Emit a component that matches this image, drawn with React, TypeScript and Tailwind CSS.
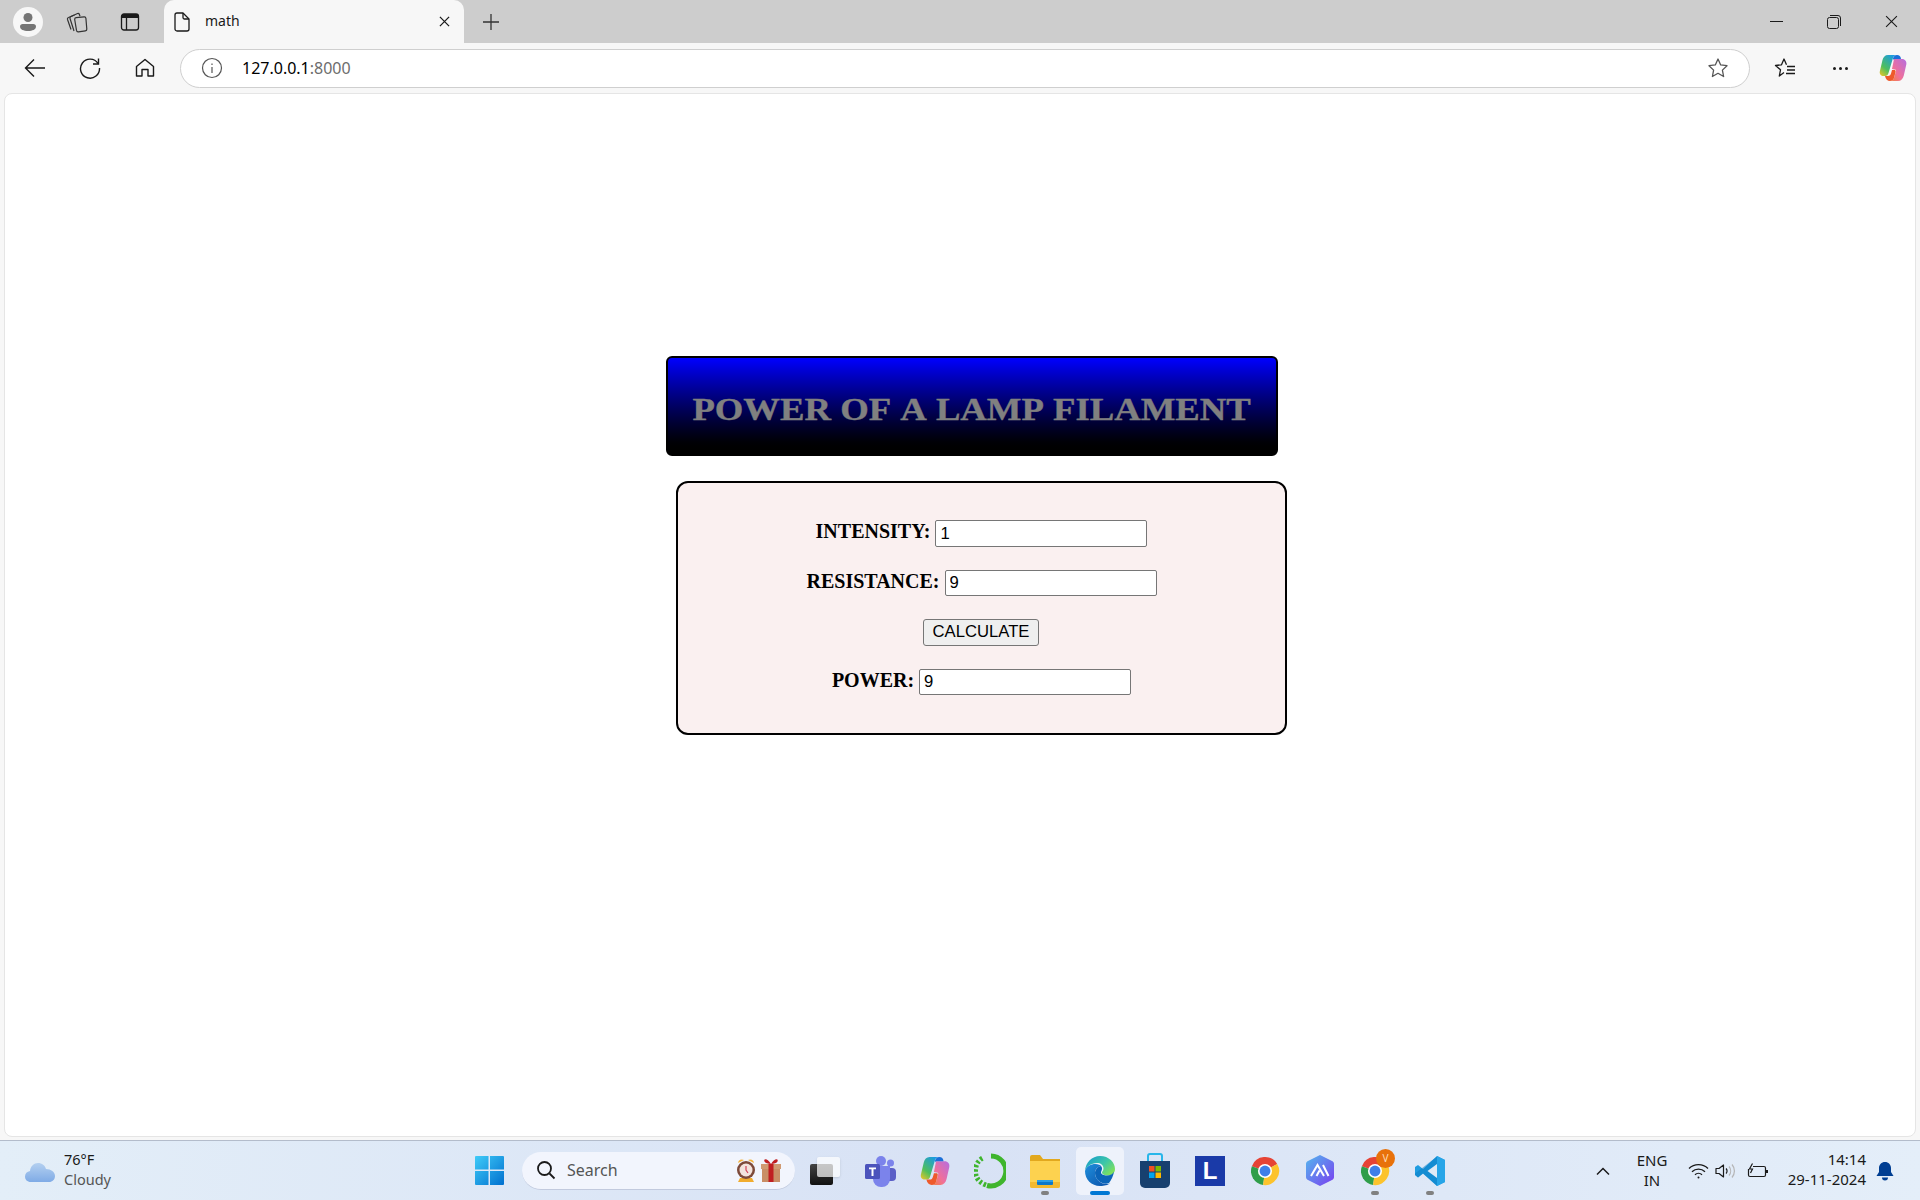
import React from "react";

const UI = "font-['Noto_Sans',sans-serif]";

function Profile() {
  return (
    <div className="w-[30px] h-[30px] rounded-full bg-[#f7f7f7] flex items-center justify-center">
      <svg width="22" height="22" viewBox="0 0 22 22" fill="#757575">
        <circle cx="11" cy="6.5" r="4.5" />
        <path d="M3 15.5c0-1.6 1.2-2.5 2.6-2.5h10.8c1.4 0 2.6.9 2.6 2.5 0 3-3.6 4.5-8 4.5s-8-1.5-8-4.5z" />
      </svg>
    </div>
  );
}

function Collections() {
  return (
    <svg width="22" height="22" viewBox="0 0 22 22" fill="none" stroke="#333" strokeWidth="1.2" strokeLinejoin="round">
      <path d="M5 18.500 1.500 8.500c-.3-1 .1-1.700 1-2L8.500 4" />
      <path d="M8 20 4 7.500c-.3-1 .1-1.700 1-2L11.500 2.500c.8-.3 1.500 0 1.800.8l.7 2" />
      <path d="M8.700 8.500c-.1-1 .5-1.700 1.400-1.800l8-.9c1-.1 1.700.5 1.800 1.400l.9 10.800c.1 1-.5 1.700-1.400 1.800l-7 1c-1 .1-1.700-.4-1.900-1.400z" fill="#cdcdcd" />
    </svg>
  );
}

function VerticalTabs() {
  return (
    <svg width="20" height="20" viewBox="0 0 20 20" fill="none">
      <rect x="1.5" y="2" width="17" height="16" rx="2.5" stroke="#1a1a1a" strokeWidth="1.3" />
      <path d="M1.5 6V4.5A2.5 2.5 0 0 1 4 2h12a2.5 2.5 0 0 1 2.5 2.5V6z" fill="#1a1a1a" />
      <path d="M6.5 6v12" stroke="#1a1a1a" strokeWidth="1.3" />
    </svg>
  );
}

function Doc() {
  return (
    <svg width="16" height="20" viewBox="0 0 16 20" fill="none" stroke="#1a1a1a" strokeWidth="1.3" strokeLinejoin="round">
      <path d="M1 3a2 2 0 0 1 2-2h6l6 6v10a2 2 0 0 1-2 2H3a2 2 0 0 1-2-2z" />
      <path d="M9 1v4.5A1.5 1.5 0 0 0 10.5 7H15" />
    </svg>
  );
}

function Cross({ size = 12, w = 1.4 }: { size?: number; w?: number }) {
  return (
    <svg width={size} height={size} viewBox="0 0 12 12" fill="none" stroke="#1a1a1a" strokeWidth={w}>
      <path d="M1 1l10 10M11 1 1 11" />
    </svg>
  );
}

function Plus() {
  return (
    <svg width="18" height="18" viewBox="0 0 18 18" fill="none" stroke="#333" strokeWidth="1.3">
      <path d="M9 1v16M1 9h16" />
    </svg>
  );
}

function Star({ c = "#555" }: { c?: string }) {
  return (
    <svg width="22" height="22" viewBox="0 0 22 22" fill="none" stroke={c} strokeWidth="1.3" strokeLinejoin="round">
      <path d="m11 2 2.7 5.9 6.3.8-4.6 4.4 1.2 6.4L11 16.3l-5.6 3.2 1.2-6.4L2 8.7l6.3-.8z" />
    </svg>
  );
}

function Favorites() {
  return (
    <svg width="22" height="22" viewBox="0 0 22 22" fill="none" stroke="#1a1a1a" strokeWidth="1.3" strokeLinejoin="round">
      <path d="M10 15.5 5.3 19l1.2-6.2L1.5 8.5l6-.7L10 2l2.5 5.8" />
      <path d="M13 9.5h8M13 13h8M12 16.5h9" />
    </svg>
  );
}

function Copilot({ s = 28 }: { s?: number }) {
  const id = `cp${s}`;
  return (
    <svg width={s} height={s} viewBox="0 0 28 28">
      <defs>
        <linearGradient id={`${id}a`} x1="0" y1="1" x2="0.7" y2="0">
          <stop offset="0" stopColor="#f6c624" />
          <stop offset="0.4" stopColor="#4fbf5c" />
          <stop offset="1" stopColor="#1b9be0" />
        </linearGradient>
        <linearGradient id={`${id}b`} x1="1" y1="0" x2="0" y2="1">
          <stop offset="0" stopColor="#b56ee0" />
          <stop offset="0.6" stopColor="#f0709a" />
          <stop offset="1" stopColor="#f5803c" />
        </linearGradient>
      </defs>
      <path d="M9 1h9c-2 0-3.4 1-4 3l-4.5 15C9 21 8 22 6 22H4.500C2 22 .3 20 .8 17.500L3.500 6C4.300 3 6 1 9 1z" fill={`url(#${id}a)`} />
      <path d="M15 5h8c3 0 5 2.500 4.300 5.500l-2.500 11C24 25 22 27 19 27h-8c2 0 3.400-1 4-3l2-7c.5-1.500-1-1.500-1.500-1.500L13 15z" fill={`url(#${id}b)`} />
      <path d="M14 4.500c.6-2 2-3.500 4-3.500 2.500 0 3.500 1 4 4h-6c-1 0-1.700.2-2 1z" fill="#1c6fd8" />
      <path d="M15 24c-.6 2-2 3-4 3-2.500 0-4.500-2-5-5h3c2 0 2.500-1 3-2.500l1-3.500h2.500c.5 0 1.500.6 1 2z" fill="#ee5a2c" />
    </svg>
  );
}

function Cloud() {
  return (
    <svg width="32" height="26" viewBox="0 0 32 26">
      <defs>
        <linearGradient id="cl" x1="0" y1="0" x2="0" y2="1">
          <stop offset="0" stopColor="#b4d0f0" />
          <stop offset="1" stopColor="#7fabe6" />
        </linearGradient>
      </defs>
      <path d="M7 24C3 24 1 21.500 1 18.500S3 13.500 6 13c.5-5 4-8 8-8s7 2.500 8 6c5 0 9 3 9 7 0 3.500-2.500 6-6 6z" fill="url(#cl)" />
    </svg>
  );
}

function WinLogo() {
  return (
    <svg width="29" height="29" viewBox="0 0 29 29">
      <defs>
        <linearGradient id="wn" x1="0" y1="0" x2="1" y2="1">
          <stop offset="0" stopColor="#3fcbf8" />
          <stop offset="1" stopColor="#0070cf" />
        </linearGradient>
      </defs>
      <path d="M1 0h12.500v13.500H0V1a1 1 0 0 1 1-1zM15 0h13a1 1 0 0 1 1 1v12.500H15zM0 15h13.500v14H1a1 1 0 0 1-1-1zM15 15h14v13a1 1 0 0 1-1 1H15z" fill="url(#wn)" />
    </svg>
  );
}

function Alarm() {
  return (
    <svg width="22" height="28" viewBox="0 0 22 28">
      <path d="M3 7a4 4 0 0 1 6-3zM19 7a4 4 0 0 0-6-3z" fill="#f3b23a" />
      <path d="M5 22l-2 4h16l-2-4z" fill="#f1ac2e" />
      <circle cx="11" cy="14" r="9" fill="#7d4a3a" />
      <circle cx="11" cy="14" r="6.500" fill="#f3e4de" />
      <path d="M11 10v4l2 3" stroke="#d2455a" strokeWidth="1.200" fill="none" />
    </svg>
  );
}

function Gift() {
  return (
    <svg width="20" height="24" viewBox="0 0 20 24">
      <rect x="1" y="8" width="18" height="16" fill="#c98e66" />
      <rect x="0" y="6" width="20" height="5" fill="#d09a72" />
      <rect x="7.500" y="6" width="5" height="18" fill="#c01f22" />
      <path d="M10 6C7 0 2 0 3.500 3.500 4 5 7 6 10 6zM10 6c3-6 8-6 6.500-2.500C16 5 13 6 10 6z" fill="#c01f22" />
    </svg>
  );
}

function TaskView() {
  return (
    <div className="relative w-[30px] h-[28px]">
      <div className="absolute left-0 bottom-0 w-[23px] h-[21px] rounded-[2px] bg-gradient-to-b from-[#444] to-[#111]" />
      <div className="absolute right-0 top-0 w-[23px] h-[20px] rounded-[2px] bg-white/70 shadow-sm" />
    </div>
  );
}

function Teams() {
  return (
    <svg width="31" height="32" viewBox="0 0 31 32">
      <circle cx="25.500" cy="8" r="3.500" fill="#7b83eb" />
      <rect x="20" y="13" width="11" height="13" rx="4" fill="#5b5fc7" />
      <circle cx="16" cy="6" r="5" fill="#7b83eb" />
      <path d="M8 11h17v13a8 8 0 0 1-8 8h-1a8 8 0 0 1-8-8z" fill="#7b83eb" />
      <rect x="0" y="9" width="15" height="15" rx="1.500" fill="#4b53bc" />
      <path d="M4 12.500h7v1.800H8.500V21H6.500v-6.700H4z" fill="#fff" />
    </svg>
  );
}

function Ring() {
  return (
    <svg width="32" height="36" viewBox="0 0 32 36" fill="none">
      <path d="M17 3a15 15 0 1 1-4 29.500" stroke="#3fb52d" strokeWidth="5" />
      <path d="M12 32C4 29 1.500 24 1.500 18S4 7 10 4.500" stroke="#3fb52d" strokeWidth="5" strokeDasharray="2.500 2" />
    </svg>
  );
}

function Folder() {
  return (
    <svg width="30" height="34" viewBox="0 0 30 34">
      <path d="M0 3a2 2 0 0 1 2-2h8l3 4h17v10H0z" fill="#e2a81e" />
      <path d="M0 7h30v25a2 2 0 0 1-2 2H2a2 2 0 0 1-2-2z" fill="#fdd24f" />
      <path d="M0 28h30v4a2 2 0 0 1-2 2H2a2 2 0 0 1-2-2z" fill="#f3b92f" />
      <rect x="7" y="26" width="16" height="5" rx="1" fill="#0c78c9" />
      <rect x="7" y="26" width="16" height="2" fill="#2b9ee6" />
    </svg>
  );
}

function Edge() {
  return (
    <svg width="30" height="36" viewBox="0 0 30 30">
      <defs>
        <linearGradient id="eg" x1="0" y1="0" x2="1" y2="0.700">
          <stop offset="0" stopColor="#1298d0" />
          <stop offset="0.600" stopColor="#3dc6a8" />
          <stop offset="1" stopColor="#7ee05c" />
        </linearGradient>
        <linearGradient id="eb" x1="0" y1="0" x2="1" y2="1">
          <stop offset="0" stopColor="#1f8fdc" />
          <stop offset="1" stopColor="#0a4fa8" />
        </linearGradient>
      </defs>
      <path d="M15 0c9 0 15 6.500 15 13 0 4-3 6.500-7 6.500-3 0-6-1-6-3 0-1 1.500-1.500 1.500-4C18.500 9 15.500 7 12 7 6 7 1 11 0 15 .5 6.500 7 0 15 0z" fill="url(#eg)" />
      <path d="M0 15c1-4.500 6-7 10.500-7 2.500 0 5 1 5.500 2-3 .5-6 3-6 7 0 6 5 11 12 11 1.500 0 2.500-.2 3.500-.7A15 15 0 0 1 15 30C6.500 30 0 23.500 0 15z" fill="url(#eb)" />
      <path d="M10 17c0-3.500 3-6.500 6-7 .7 1 1 1.500 1 2.500 0 2-1 2.500-1 4 0 2 3 3 6 3 3 0 6-1.500 7-4-.5 4.500-3 9-5 11.500-1 .5-2 .7-3 .7-6 0-11-5-11-10.700z" fill="#0b64b8" />
    </svg>
  );
}

function Store() {
  return (
    <svg width="30" height="36" viewBox="0 0 30 36">
      <path d="M8 9V3a2 2 0 0 1 2-2h10a2 2 0 0 1 2 2v6" fill="none" stroke="#27b6ea" strokeWidth="2" />
      <path d="M0 8h30v22a5 5 0 0 1-5 5H5a5 5 0 0 1-5-5z" fill="#17406f" />
      <rect x="9" y="13" width="5.500" height="5.500" fill="#f25022" />
      <rect x="15.500" y="13" width="5.500" height="5.500" fill="#7fba00" />
      <rect x="9" y="19.500" width="5.500" height="5.500" fill="#00a4ef" />
      <rect x="15.500" y="19.500" width="5.500" height="5.500" fill="#ffb900" />
    </svg>
  );
}

function LLogo() {
  return (
    <div className="w-[30px] h-[30px] bg-[#1a3aa8] flex items-center justify-center">
      <span className="font-['Liberation_Sans',sans-serif] font-bold text-[24px] leading-none text-white">L</span>
    </div>
  );
}

function Chrome() {
  return (
    <svg width="30" height="30" viewBox="0 0 32 32">
      <path d="M16 16 29 8.500A15 15 0 0 0 2 10.800z" fill="#e64335" />
      <path d="M16 16 2 10.800A15 15 0 0 0 14 30.900z" fill="#2f9e4a" />
      <path d="M16 16 14 30.900A15 15 0 0 0 29 8.500z" fill="#fcc32c" />
      <circle cx="16" cy="16" r="7.500" fill="#fff" />
      <circle cx="16" cy="16" r="5.800" fill="#3f7fe8" />
    </svg>
  );
}

function Hex() {
  return (
    <svg width="28" height="31" viewBox="0 0 28 31">
      <defs>
        <linearGradient id="hx" x1="0" y1="0" x2="1" y2="1">
          <stop offset="0" stopColor="#53b8ee" />
          <stop offset="1" stopColor="#7a3df0" />
        </linearGradient>
      </defs>
      <path d="M14 0 26 6c1.300.7 2 1.700 2 3v13c0 1.300-.7 2.300-2 3l-12 6-12-6c-1.300-.7-2-1.700-2-3V9c0-1.300.7-2.300 2-3z" fill="url(#hx)" />
      <path d="M5 21 11.500 10 18 21M10.500 21l3-5.500M17 10l5.500 11" stroke="#fff" strokeWidth="2" fill="none" />
    </svg>
  );
}

function VSCode() {
  return (
    <svg width="30" height="30" viewBox="0 0 30 30">
      <path d="M22 0 30 4v22l-8 4-14-12.500-5 4L0 19V11l3-2 5 4z" fill="#1f9ce0" />
      <path d="M22 0v30L8 17.500l-5 4L0 19v-1.500l22-17z" fill="#0a7cc4" opacity="0.500" />
      <path d="M22 8 12.500 15 22 22z" fill="#dfeaf6" />
      <path d="M22 0 30 4v22l-8 4z" fill="#27a5e8" />
    </svg>
  );
}

function Slot({ children, active, dot }: { children: React.ReactNode; active?: boolean; dot?: boolean }) {
  return (
    <div className="relative w-[55px] h-[60px] flex items-center justify-center">
      {active && <div className="absolute left-[3.500px] top-[6px] w-[48px] h-[48px] rounded-[5px] bg-[#eef2fb]" />}
      <div className="relative">{children}</div>
      {active && <div className="absolute left-[17.500px] top-[50px] w-[20px] h-[4px] rounded-full bg-[#0078d4]" />}
      {dot && <div className="absolute left-[23.500px] top-[50px] w-[8px] h-[4px] rounded-full bg-[#808080]" />}
    </div>
  );
}

function Row({ label, value, tall }: { label: string; value: string; tall?: boolean }) {
  return (
    <div className={`flex justify-center items-center gap-[5px] ${tall ? "h-[27px]" : "h-[26px]"}`}>
      <label className={`font-['Liberation_Serif',serif] font-bold text-[20px] leading-[22px] text-black ${tall ? "pb-[5px]" : "pb-[4px]"}`}>{label}</label>
      <input
        readOnly
        value={value}
        className="w-[212px] h-full bg-white border border-[#767676] rounded-[2px] pl-[4px] font-['Liberation_Sans',sans-serif] text-[16.67px] text-black outline-none"
      />
    </div>
  );
}

export default function App() {
  return (
    <div className={`w-[1920px] h-[1200px] flex flex-col overflow-hidden bg-[#f7f7f7] ${UI}`}>
      {/* tab strip */}
      <div className="h-[43px] flex bg-[#cdcdcd] shrink-0">
        <div className="w-[56px] flex items-center justify-center"><Profile /></div>
        <div className="w-[42px] flex items-center justify-center"><Collections /></div>
        <div className="w-[63px] flex items-center justify-center"><VerticalTabs /></div>
        <div className="ml-[3px] w-[300px] rounded-t-[10px] bg-[#f7f7f7] flex items-center pl-[10px] pr-[14px]">
          <Doc />
          <span className="ml-[15px] text-[14px] text-[#1a1a1a] flex-1 pb-[2px]">math</span>
          <Cross size={11} />
        </div>
        <div className="w-[53px] pl-[1px] flex items-center justify-center"><Plus /></div>
        <div className="flex-1" />
        <div className="w-[57px] flex items-center justify-center">
          <div className="w-[13px] h-[1px] bg-[#1a1a1a]" />
        </div>
        <div className="w-[57px] flex items-center justify-center">
          <svg width="14" height="14" viewBox="0 0 14 14" fill="none" stroke="#1a1a1a" strokeWidth="1">
            <rect x="0.500" y="2.500" width="11" height="11" rx="2" />
            <path d="M3 .5h8a2.500 2.500 0 0 1 2.500 2.500v8" />
          </svg>
        </div>
        <div className="w-[58px] flex items-center justify-center"><Cross size={13} w={1} /></div>
      </div>

      {/* toolbar */}
      <div className="h-[50px] flex items-center shrink-0">
        <div className="w-[70px] flex items-center justify-center">
          <svg width="22" height="20" viewBox="0 0 22 20" fill="none" stroke="#1a1a1a" strokeWidth="1.400">
            <path d="M21 10H1.500M10 1.500 1.500 10l8.500 8.500" />
          </svg>
        </div>
        <div className="w-[40px] flex items-center justify-center">
          <svg width="22" height="22" viewBox="0 0 22 22" fill="none" stroke="#1a1a1a" strokeWidth="1.400">
            <path d="M19 6.500A9.500 9.500 0 1 0 20.500 11" />
            <path d="M19.500 1.500v5.500H14" />
          </svg>
        </div>
        <div className="ml-[15px] w-[40px] flex items-center justify-center">
          <svg width="20" height="20" viewBox="0 0 20 20" fill="none" stroke="#1a1a1a" strokeWidth="1.400" strokeLinejoin="round">
            <path d="M1.500 8.500 10 1.500l8.500 7V18h-5.500v-6.500H7V18H1.500z" />
          </svg>
        </div>
        <div className="ml-[15px] w-[1570px] h-[39px] rounded-full bg-white border border-[#cfcfcf] flex items-center pl-[20px] pr-[20px]">
          <svg width="22" height="22" viewBox="0 0 22 22" fill="none" stroke="#555" strokeWidth="1.200">
            <circle cx="11" cy="11" r="9.500" />
            <path d="M11 10v6M11 6.500v1.500" />
          </svg>
          <span className="ml-[19px] text-[16px] leading-none flex-1 text-black">
            127.0.0.1<span className="text-[#6d6d6d]">:8000</span>
          </span>
          <Star />
        </div>
        <div className="w-[70px] flex items-center justify-center"><Favorites /></div>
        <div className="w-[40px] flex items-center justify-center gap-[3px]">
          <i className="w-[3px] h-[3px] rounded-full bg-[#1a1a1a]" />
          <i className="w-[3px] h-[3px] rounded-full bg-[#1a1a1a]" />
          <i className="w-[3px] h-[3px] rounded-full bg-[#1a1a1a]" />
        </div>
        <div className="w-[60px] pl-[6px] flex items-center justify-center"><Copilot /></div>
      </div>

      {/* page */}
      <div className="flex-1 min-h-0 px-[4px] pb-[3px] flex">
        <div className="flex-1 rounded-lg border border-[#e5e5e5] bg-white pl-[661px] pt-[262px]">
          <div className="w-[612px] h-[100px] box-border border-2 border-black rounded-[6px] bg-gradient-to-b from-[#0000ff] to-[#000000] flex items-center justify-center pt-[5px]">
            <h1 className="font-['Liberation_Serif',serif] font-bold text-[32px] leading-none text-[#808080] whitespace-nowrap scale-x-[1.146] [font-kerning:none] [-webkit-text-stroke:0.4px_#808080]">
              POWER OF A LAMP FILAMENT
            </h1>
          </div>
          <div className="mt-[25px] ml-[10px] w-[611px] h-[254px] box-border border-2 border-black rounded-[12px] bg-[#faf0f0] pt-[37px] flex flex-col gap-[23px]">
            <Row label="INTENSITY:" value="1" tall />
            <Row label="RESISTANCE:" value="9" />
            <div className="flex justify-center pr-[1px]">
              <button className="w-[116px] h-[27px] bg-[#efefef] border border-[#767676] rounded-[3px] font-['Liberation_Sans',sans-serif] text-[16.67px] leading-none text-black pb-[1px]">
                CALCULATE
              </button>
            </div>
            <Row label="POWER:" value="9" />
          </div>
        </div>
      </div>

      {/* taskbar */}
      <div className="h-[60px] shrink-0 border-t border-[#b3bccb] flex items-center bg-gradient-to-r from-[#e3eef8] via-[#d8e2f5] to-[#e4eef9]">
        <div className="w-[64px] pl-[24px] flex items-center"><Cloud /></div>
        <div className="w-[411px] text-[14.5px] leading-[20px] pb-[4px]">
          <div className="text-[#1a1a1a]">76°F</div>
          <div className="text-[#555]">Cloudy</div>
        </div>
        <div className="w-[47px] flex items-center"><WinLogo /></div>
        <div className="w-[273px] h-[38px] rounded-full bg-[#f2f5fd] border-b border-[#c2cade] flex items-center pl-[14px] pr-[14px]">
          <svg width="20" height="20" viewBox="0 0 20 20" fill="none" stroke="#1a1a1a" strokeWidth="1.800">
            <circle cx="8.500" cy="8.500" r="6.500" />
            <path d="m13.500 13.500 5 5" />
          </svg>
          <span className="ml-[11px] flex-1 text-[16px] text-[#555]">Search</span>
          <Alarm />
          <div className="ml-[4px]"><Gift /></div>
        </div>
        <div className="w-[2.500px]" />
        <Slot><TaskView /></Slot>
        <Slot><Teams /></Slot>
        <Slot><Copilot s={30} /></Slot>
        <Slot><Ring /></Slot>
        <Slot dot><Folder /></Slot>
        <Slot active><Edge /></Slot>
        <Slot><Store /></Slot>
        <Slot><LLogo /></Slot>
        <Slot><Chrome /></Slot>
        <Slot><Hex /></Slot>
        <Slot dot>
          <Chrome />
          <div className="absolute -right-[5px] -top-[7px] w-[19px] h-[19px] rounded-full bg-[#e8710a] flex items-center justify-center text-[10px] leading-none text-[#ffdcb5]">V</div>
        </Slot>
        <Slot dot><VSCode /></Slot>
        <div className="w-[170.500px] flex justify-end pr-[17px]">
          <svg width="16" height="10" viewBox="0 0 16 10" fill="none" stroke="#1a1a1a" strokeWidth="1.500">
            <path d="m2 8.500 6-6 6 6" />
          </svg>
        </div>
        <div className="w-[48px] text-center text-[15px] leading-[20px] text-[#1a1a1a] pb-[2px]">
          <div>ENG</div>
          <div>IN</div>
        </div>
        <div className="ml-[9px] w-[26px] flex justify-center">
          <svg width="21" height="16" viewBox="0 0 21 16" fill="none" stroke="#1a1a1a" strokeWidth="1.300">
            <path d="M1 5.500a13.500 13.500 0 0 1 19 0M4 8.800a9.300 9.300 0 0 1 13 0M7 11.800a5 5 0 0 1 7 0" />
            <circle cx="10.500" cy="14.500" r="1" fill="#1a1a1a" stroke="none" />
          </svg>
        </div>
        <div className="ml-[2px] w-[24px] flex justify-center">
          <svg width="20" height="16" viewBox="0 0 20 16" fill="none" strokeWidth="1.200">
            <path d="M1 5.500h3L8.500 2v12L4 10.500H1z" stroke="#1a1a1a" strokeLinejoin="round" />
            <path d="M11 5.500a3.500 3.500 0 0 1 0 5" stroke="#1a1a1a" />
            <path d="M14 3.500a7 7 0 0 1 0 9M17 1.500a10 10 0 0 1 0 13" stroke="#b5b5b5" />
          </svg>
        </div>
        <div className="ml-[7px] w-[28px] flex justify-center">
          <svg width="22" height="16" viewBox="0 0 22 16" fill="none" stroke="#1a1a1a" strokeWidth="1.200">
            <path d="M6 3.500h11a1.500 1.500 0 0 1 1.500 1.500v7a1.500 1.500 0 0 1-1.500 1.500H3A1.500 1.500 0 0 1 1.500 12V6" />
            <path d="M20 7v3" strokeWidth="2" />
            <path d="M5.500.5 2.500 6h3l-2 4" />
          </svg>
        </div>
        <div className="ml-[2px] w-[92px] text-right text-[15px] leading-[20px] text-[#1a1a1a] whitespace-nowrap pb-[4px]">
          <div>14:14</div>
          <div>29-11-2024</div>
        </div>
        <div className="ml-[10px]">
          <svg width="18" height="20" viewBox="0 0 18 20" fill="#003e92">
            <path d="M9 1c3.500 0 6 2.700 6 6v4l2.500 4H.5L3 11V7c0-3.300 2.500-6 6-6z" />
            <path d="M6 16.500h6a3 3 0 0 1-6 0z" />
          </svg>
        </div>
      </div>
    </div>
  );
}
